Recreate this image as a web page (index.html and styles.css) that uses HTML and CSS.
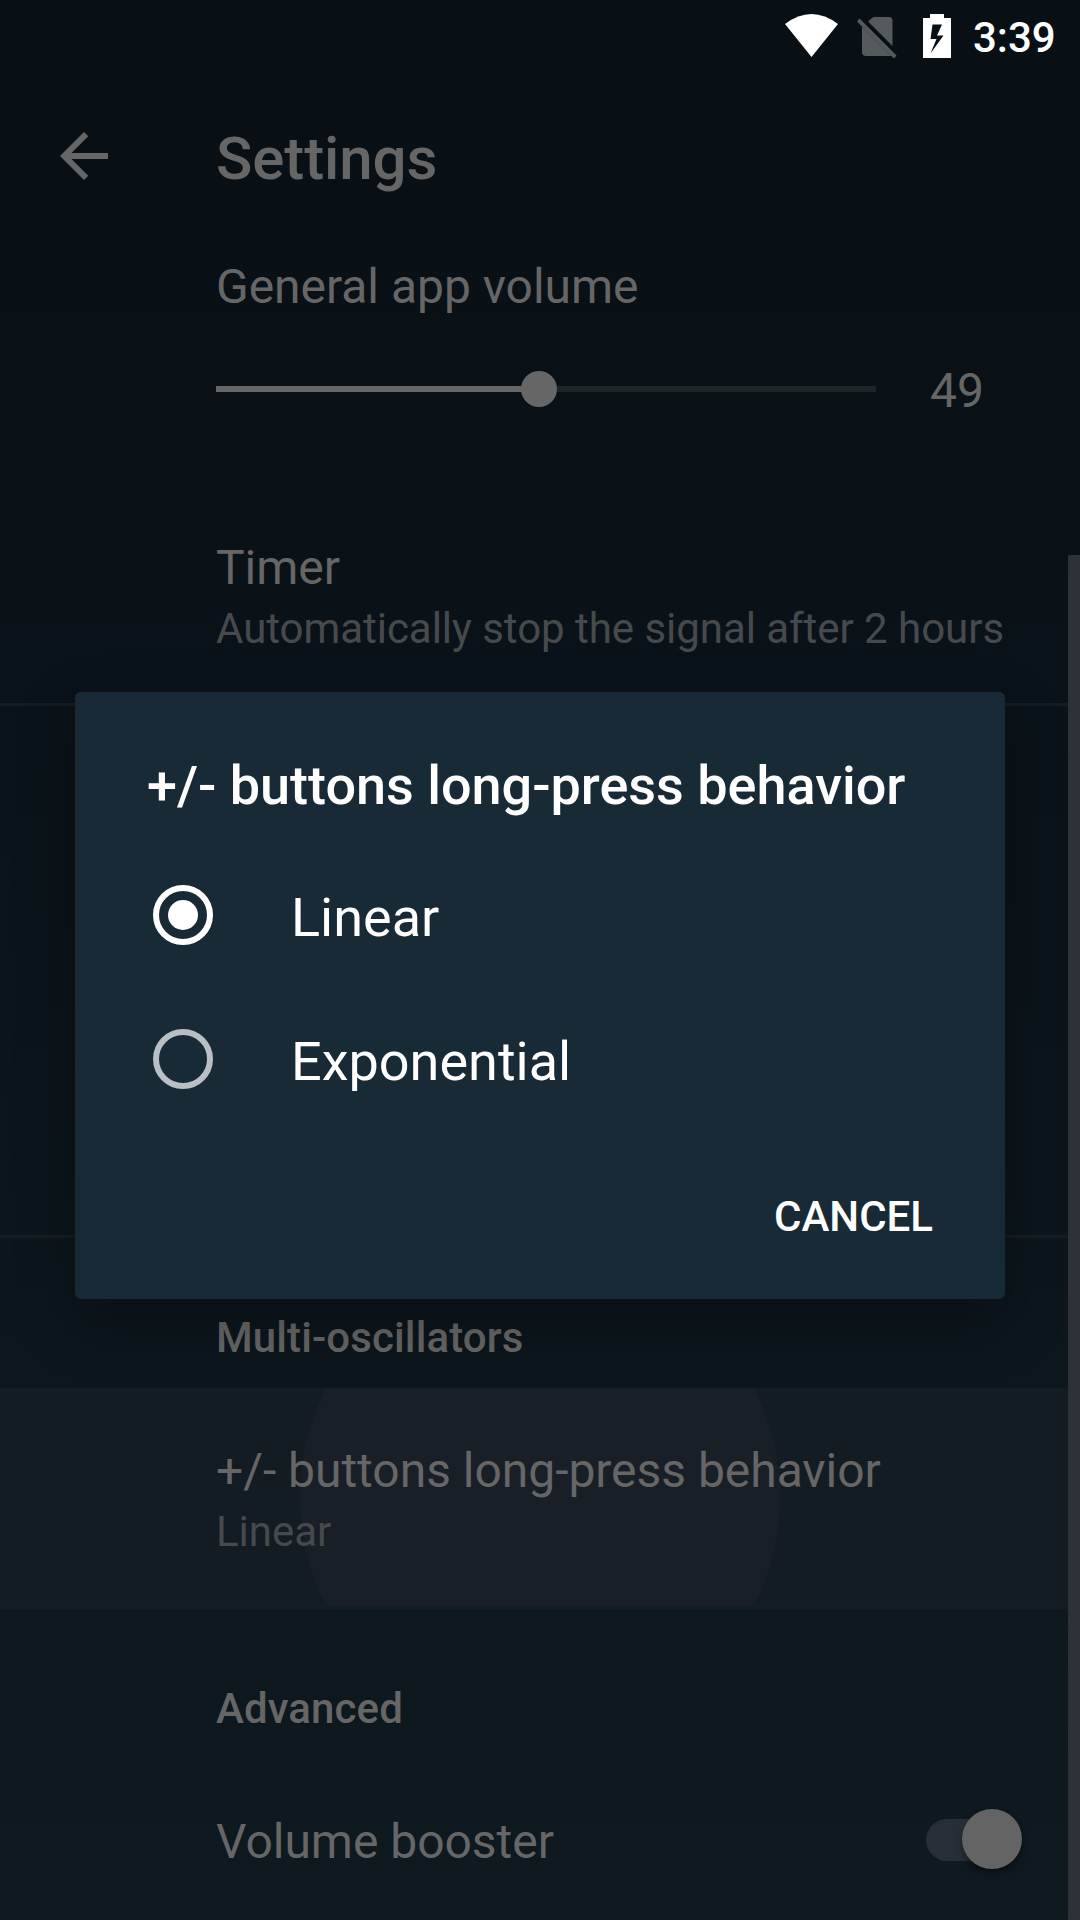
FILE: index.html
```html
<!DOCTYPE html>
<html lang="en">
<head>
<meta charset="utf-8">
<title>Settings</title>
<link rel="stylesheet" href="styles.css">
</head>
<body>
<div class="screen">
  <header class="status-bar">
    <svg class="wifi" width="54" height="44" viewBox="0 0 54 44"><path d="M0 10Q26.500-10 53 10L26.500 43Z" fill="#fff"/></svg>
    <svg class="sim" width="40" height="42" viewBox="0 0 40 42"><g fill="#555a5d"><path d="M11 4.500l4-3.500q1-1 3-1h14q3.500 0 3.500 3.500v25.500z"/><path d="M5 9.500L34.500 39H9q-4 0-4-4z"/><path d="M2.500 1.500L39.500 38.500 37 41.500 0 4.500z"/></g></svg>
    <svg class="battery" width="28" height="44" viewBox="0 0 28 44"><path fill="#fff" fill-rule="evenodd" d="M7 0h14v4h7v40H0V4h7zM9.500 10.500L7.500 25h6L7.500 39.500 20.500 21.500H14L19 10.500z"/></svg>
    <span class="clock">3:39</span>
  </header>
  <div class="app-bar">
    <svg class="back" width="72" height="72" viewBox="0 0 24 24"><path fill="#666" d="M20 11H7.830l5.590-5.590L12 4l-8 8 8 8 1.410-1.410L7.830 13H20z"/></svg>
    <h1 class="app-title">Settings</h1>
  </div>
  <main class="prefs">
    <section class="pref volume">
      <div class="title">General app volume</div>
      <div class="slider-row">
        <div class="track"><div class="fill"></div><div class="thumb"></div></div>
        <div class="value">49</div>
      </div>
    </section>
    <section class="pref timer">
      <div class="title">Timer</div>
      <div class="summary">Automatically stop the signal after 2 hours</div>
    </section>
    <section class="group covered"></section>
    <section class="group oscillators">
      <h2 class="category">Multi-oscillators</h2>
      <div class="pref pressed">
        <div class="title">+/- buttons long-press behavior</div>
        <div class="summary">Linear</div>
      </div>
    </section>
    <section class="group advanced">
      <h2 class="category">Advanced</h2>
      <div class="pref booster">
        <div class="title">Volume booster</div>
        <div class="switch"><div class="knob"></div></div>
      </div>
    </section>
  </main>
  <div class="scrollbar"></div>
  <div class="dialog" role="dialog">
    <h2 class="dialog-title">+/- buttons long-press behavior</h2>
    <div class="option"><span class="radio on"></span><span>Linear</span></div>
    <div class="option"><span class="radio"></span><span>Exponential</span></div>
    <div class="actions"><span class="cancel">CANCEL</span></div>
  </div>
</div>
</body>
</html>
```
FILE: styles.css
```css
* { box-sizing: border-box; }
body { margin: 0; font-family: Roboto, "Noto Sans", sans-serif; }
h1, h2 { margin: 0; font-weight: 500; }

.screen {
  position: relative;
  display: flex;
  flex-direction: column;
  width: 1080px;
  height: 1920px;
  overflow: hidden;
  color: #666;
  background: linear-gradient(#080f15, #0e1920);
}

.status-bar {
  display: flex;
  align-items: flex-start;
  height: 72px;
  padding: 14px 0 0 785px;
  color: #fff;
}
.sim { margin: 3px 0 0 18px; }
.battery { margin-left: 26px; }
.clock { margin: -1px 0 0 22px; font-size: 42px; font-weight: 500; line-height: 50px; }

.app-bar { display: flex; align-items: center; height: 168px; padding-left: 48px; }
.app-title { margin-left: 96px; padding-top: 5px; font-size: 60px; line-height: 70px; letter-spacing: -0.1px; }

.title { font-size: 48px; line-height: 56px; letter-spacing: -0.03px; white-space: nowrap; }
.summary { margin-top: 8px; font-size: 42px; line-height: 50px; letter-spacing: -0.04px; color: #474a4c; white-space: nowrap; }
.category { padding-left: 216px; font-size: 42px; line-height: 50px; letter-spacing: 0.1px; }
.pref { padding-left: 216px; }

.volume { height: 260px; padding-top: 19px; }
.slider-row { display: flex; align-items: center; height: 78px; margin-top: 35px; }
.track { position: relative; width: 660px; height: 6px; background: #1f2427; }
.fill { width: 323px; height: 6px; background: #666; }
.thumb { position: absolute; left: 305px; top: -15px; width: 36px; height: 36px; border-radius: 50%; background: #666; }
.value { width: 162px; padding-top: 4px; text-align: center; font-size: 48px; line-height: 56px; }

.timer { height: 203px; padding-top: 40px; }
.group { border-top: 3px solid #151d23; }
.covered { height: 532px; }
.oscillators { height: 371px; padding-top: 75px; }
.pressed {
  height: 218px;
  margin-top: 25px;
  padding-top: 55px;
  background: radial-gradient(circle at 540px 50%, #181f26 239.500px, #131c23 240.500px);
}
.advanced { height: 314px; padding-top: 75px; }
.booster { display: flex; align-items: center; justify-content: space-between; height: 160px; margin-top: 28px; padding-right: 75px; }
.switch { position: relative; width: 79px; height: 42px; margin-top: -5px; border-radius: 21px; background: #272e35; }
.knob { position: absolute; left: 35.500px; top: -10px; width: 60px; height: 60px; border-radius: 50%; background: #646464; box-shadow: 0 4px 6px rgba(0,0,0,.35); }

.scrollbar { position: absolute; right: 0; top: 555px; width: 12px; height: 1365px; background: #2d3239; }

.dialog {
  position: absolute;
  left: 75px;
  top: 692px;
  width: 930px;
  height: 607px;
  padding-top: 62px;
  border-radius: 6px;
  color: #fff;
  background: #182a36;
  box-shadow: 0 24px 60px rgba(0,0,0,.28);
}
.dialog-title { padding-left: 72px; font-size: 54px; line-height: 64px; letter-spacing: -0.02px; white-space: nowrap; }
.option { display: flex; align-items: center; gap: 78px; height: 144px; padding-left: 78px; font-size: 54px; line-height: 64px; }
.dialog-title + .option { margin-top: 25px; }
.option span:last-child { padding-top: 5px; }
.radio { display: flex; align-items: center; justify-content: center; width: 60px; height: 60px; border: 6px solid #b9bfc3; border-radius: 50%; }
.radio.on { border-color: #fff; }
.radio.on::after { content: ""; width: 30px; height: 30px; border-radius: 50%; background: #fff; }
.actions { display: flex; justify-content: flex-end; padding: 61px 72px 0 0; }
.cancel { font-size: 42px; font-weight: 500; line-height: 50px; }
```
